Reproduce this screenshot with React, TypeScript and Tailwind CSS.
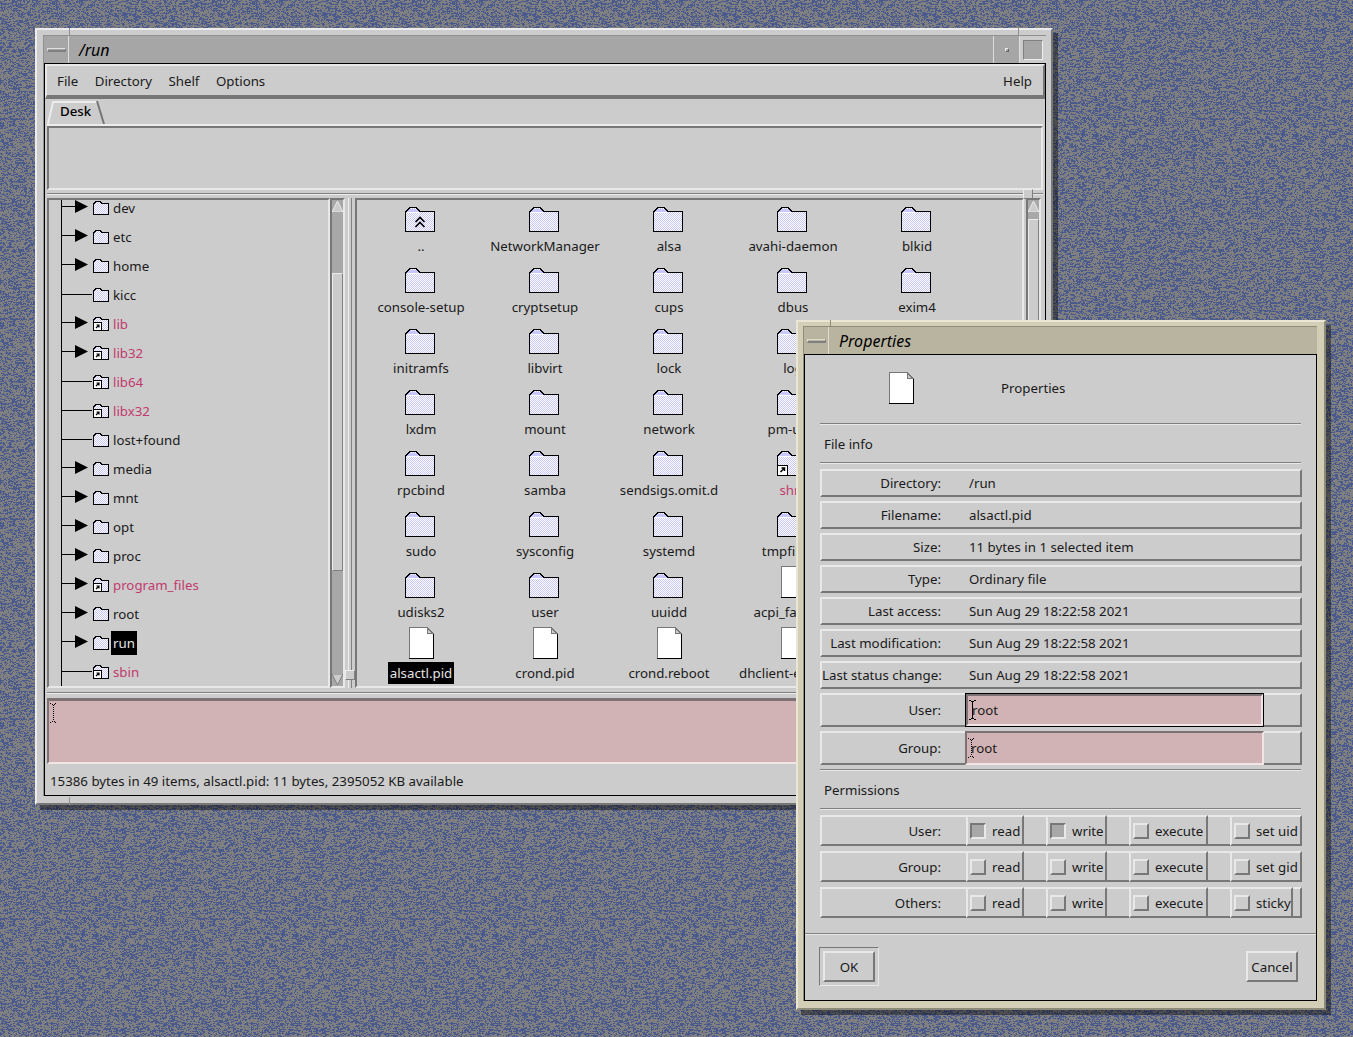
import React from "react";

// wallpaper: seeded 1px noise, two colours, slightly clumped
function noisePath(size: number) {
  let s = 2463534242;
  const next = () => {
    s ^= s << 13;
    s ^= s >>> 17;
    s ^= s << 5;
    s >>>= 0;
    return s / 4294967296;
  };
  let d = "";
  let prev = false;
  for (let y = 0; y < size; y++) {
    for (let x = 0; x < size; x++) {
      const blue = next() < 0.3 ? prev : next() < 0.42;
      if (blue) d += `M${x} ${y}h1v1h-1z`;
      prev = blue;
    }
  }
  return d;
}
const NOISE = noisePath(200);

function Wallpaper() {
  return (
    <svg className="absolute inset-0" width="1353" height="1037" shapeRendering="crispEdges">
      <defs>
        <pattern id="noise" width="200" height="200" patternUnits="userSpaceOnUse">
          <rect width="200" height="200" fill="#808080" />
          <path d={NOISE} fill="#4a5a8c" />
        </pattern>
        <pattern id="dither" width="2" height="2" patternUnits="userSpaceOnUse">
          <rect width="2" height="2" fill="#ffffff" />
          <rect width="1" height="1" fill="#c8c8ff" />
          <rect x="1" y="1" width="1" height="1" fill="#c8c8ff" />
        </pattern>
      </defs>
      <rect width="1353" height="1037" fill="url(#noise)" />
    </svg>
  );
}

function Folder({ up, link }: { up?: boolean; link?: boolean }) {
  return (
    <svg width="31" height="25" viewBox="0 0 31 25" shapeRendering="crispEdges" className="-ml-[1px] shrink-0">
      <path d="M1 24V5h1V4h1V3h1V2h1V1h7v1h1v1h1v1h1v1h15v19z" fill="url(#dither)" stroke="none" />
      <path d="M2 5V4h1V3h1V2h8v1h1v1h1v1z" fill="#c8c8ff" />
      <path d="M.5 24.5v-20h1v-1h1v-1h1v-1h1v-1h7v1h1v1h1v1h1v1h15v20z" fill="none" stroke="#000" />
      <path d="M2 5h13" stroke="#fff" />
      {up && (
        <g fill="none" stroke="#000" strokeWidth="1.6" shapeRendering="auto">
          <path d="M10.5 15l4.5-4.5 4.5 4.5" />
          <path d="M10.5 20l4.5-4.5 4.5 4.5" />
        </g>
      )}
      {link && (
        <g>
          <rect x=".5" y="14.5" width="10" height="10" fill="#fff" stroke="#000" />
          <path d="M3.5 21l4-4M4.5 17h3v3" fill="none" stroke="#000" strokeWidth="1.5" shapeRendering="auto" />
        </g>
      )}
    </svg>
  );
}

function SmallFolder({ link }: { link?: boolean }) {
  return (
    <svg width="16" height="14" viewBox="0 0 16 14" shapeRendering="crispEdges" className="shrink-0">
      <path d="M1 13V3l2-2h4l2 2h6v10z" fill="url(#dither)" />
      <path d="M.5 13.5v-11h1v-1h1v-1h5v1h1v1h7v11z" fill="none" stroke="#000" />
      {link && (
        <g>
          <rect x=".5" y="5.5" width="8" height="8" fill="#fff" stroke="#000" />
          <path d="M3 11l3-3M3.5 8H6v2.5" fill="none" stroke="#000" strokeWidth="1.2" shapeRendering="auto" />
        </g>
      )}
    </svg>
  );
}

function FileIcon() {
  return (
    <svg width="25" height="32" viewBox="0 0 25 32" shapeRendering="crispEdges" className="shrink-0">
      <path d="M1 1h17l6 6v24H1z" fill="#fff" />
      <path d="M18 1l6 6h-6z" fill="#cccccc" />
      <path d="M.5 31V.5h17.5M18 .5l6 6" fill="none" stroke="#777" />
      <path d="M18.5 .5v6h6" fill="none" stroke="#777" />
      <path d="M24.5 7v24.5H0" fill="none" stroke="#000" />
    </svg>
  );
}

function IBeam({ dotted }: { dotted?: boolean }) {
  return (
    <svg width="7" height="20" viewBox="0 0 7 20" shapeRendering="crispEdges" className="shrink-0">
      <path
        d="M0 .5h2M5 .5h2M2 1.5h3M3.5 2v16M2 18.5h3M0 19.5h2M5 19.5h2"
        stroke="#000"
        strokeDasharray={dotted ? "1 1" : undefined}
        fill="none"
      />
    </svg>
  );
}

function Sep({ full }: { full?: boolean }) {
  return <div className={`h-[2px] border-t border-b border-t-[#808080] border-b-[#e8e8e8] ${full ? "" : "mx-[15px]"}`} />;
}

function TitleBar({ title, beige, maximize }: { title: string; beige?: boolean; maximize?: boolean }) {
  const bg = beige ? "bg-[#b9b4a0]" : "bg-[#a6a6a6]";
  const line = beige ? "border-[#dedbc8]" : "border-[#dedede]";
  return (
    <div className={`flex h-[27px] shrink-0 ${bg}`}>
      <div className={`flex h-full w-[25px] shrink-0 items-center justify-center border-r ${line}`}>
        <div className={`h-[4px] w-[19px] border-t border-l border-b-2 border-r ${line} border-b-[#808080] border-r-[#808080]`} />
      </div>
      <div className="ml-[10px] flex-1 text-[16px] leading-[29px] italic text-black">{title}</div>
      {maximize && (
        <>
          <div className={`flex h-full w-[26px] shrink-0 items-center justify-center border-l ${line}`}>
            <div className="h-[4px] w-[4px] border border-t-[#eee] border-l-[#eee] border-r-[#666] border-b-[#666]" />
          </div>
          <div className={`flex h-full w-[27px] shrink-0 items-center justify-center border-l ${line} bg-[#cccccc]`}>
            <div className="h-[20px] w-[20px] border border-t-[#808080] border-l-[#808080] border-r-[#eee] border-b-[#eee] bg-[#a6a6a6]" />
          </div>
        </>
      )}
    </div>
  );
}

const TREE: { name: string; arrow?: boolean; link?: boolean; selected?: boolean }[] = [
  { name: "dev", arrow: true },
  { name: "etc", arrow: true },
  { name: "home", arrow: true },
  { name: "kicc" },
  { name: "lib", arrow: true, link: true },
  { name: "lib32", arrow: true, link: true },
  { name: "lib64", link: true },
  { name: "libx32", link: true },
  { name: "lost+found" },
  { name: "media", arrow: true },
  { name: "mnt", arrow: true },
  { name: "opt", arrow: true },
  { name: "proc", arrow: true },
  { name: "program_files", arrow: true, link: true },
  { name: "root", arrow: true },
  { name: "run", arrow: true, selected: true },
  { name: "sbin", link: true },
];

function TreeRow({ name, arrow, link, selected }: (typeof TREE)[number]) {
  return (
    <div className="flex h-[29px] items-center">
      <svg width="44" height="29" viewBox="0 0 44 29" shapeRendering="crispEdges" className="shrink-0">
        <path d="M12.5 0v29" stroke="#000" />
        <path d={arrow ? "M12 13.5h14" : "M12 14.5h31"} stroke="#000" />
        {arrow && <path d="M26 7l13 6.5L26 20z" fill="#000" shapeRendering="auto" />}
      </svg>
      <div className="flex h-[29px] items-center pt-[1px]">
        <SmallFolder link={link} />
      </div>
      <span
        className={`ml-[2px] px-[2px] leading-[24px] ${
          selected ? "bg-black text-[#e4e4e4]" : link ? "text-[#c23a6e]" : "text-[#1a1a1a]"
        }`}
      >
        {name}
      </span>
    </div>
  );
}

type Item = { name: string; kind: "folder" | "up" | "link" | "file" | "blank"; selected?: boolean; under?: boolean };
const f = (name: string): Item => ({ name, kind: "folder" });
const p = (name: string): Item => ({ name, kind: "file" });
const blank = (name: string): Item => ({ name, kind: "blank" });

const FILES: Item[] = [
  { name: "..", kind: "up" }, f("NetworkManager"), f("alsa"), f("avahi-daemon"), f("blkid"),
  f("console-setup"), f("cryptsetup"), f("cups"), f("dbus"), f("exim4"),
  f("initramfs"), f("libvirt"), f("lock"), f("log"), blank("b1"),
  f("lxdm"), f("mount"), f("network"), f("pm-utils"), blank("b2"),
  f("rpcbind"), f("samba"), f("sendsigs.omit.d"), { name: "shm", kind: "link" }, blank("b3"),
  f("sudo"), f("sysconfig"), f("systemd"), f("tmpfiles.d"), blank("b4"),
  f("udisks2"), f("user"), f("uuidd"), p("acpi_fakekey"), blank("b5"),
  { name: "alsactl.pid", kind: "file", selected: true }, p("crond.pid"), p("crond.reboot"),
  { name: "dhclient-eth", kind: "file", under: true },
];

function FileCell({ item }: { item: Item }) {
  if (item.kind === "blank") return <div className="h-[61px] w-[124px]" />;
  return (
    <div className="flex h-[61px] w-[124px] flex-col items-center">
      <div className="flex h-[32px] items-end">
        {item.kind === "file" ? <FileIcon /> : <Folder up={item.kind === "up"} link={item.kind === "link"} />}
      </div>
      <div
        className={`mt-[3px] px-[2px] leading-[22px] whitespace-nowrap ${item.under ? "ml-[6px] self-start" : ""} ${
          item.selected ? "bg-black text-[#e4e4e4]" : item.kind === "link" ? "text-[#c23a6e]" : "text-[#1a1a1a]"
        }`}
      >
        {item.name}
      </div>
    </div>
  );
}

function MainWindow() {
  return (
    <div className="absolute left-[35px] top-[28px] h-[777px] w-[1018px] border-2 border-t-[#ececec] border-l-[#ececec] border-r-[#777777] border-b-[#777777] bg-[#cccccc] pt-[5px] pr-[5px] pl-[6px] shadow-[5px_5px_0_rgba(0,0,0,0.4)]">
      <div className="border-t border-l border-t-[#909090] border-l-[#909090]">
        <TitleBar title="/run" maximize />
        <div className="flex h-[733px] flex-col border border-black bg-[#cccccc]">
          {/* menu */}
          <div className="flex h-[35px] shrink-0 items-center gap-[16.5px] border-t-2 border-l-2 border-t-[#e8e8e8] border-l-[#e8e8e8] border-b-[4px] border-b-[#777777] border-r-2 border-r-[#777777] pt-[2px] pr-[11px] pl-[10px] text-[#1a1a1a]">
            <span>File</span>
            <span>Directory</span>
            <span>Shelf</span>
            <span>Options</span>
            <span className="ml-auto">Help</span>
          </div>
          {/* tabs */}
          <div className="h-[25px] shrink-0 pl-[2px]">
            <div className="relative h-[25px] w-[58px] pl-[13px] leading-[25px] font-medium text-black">
              Desk
              <svg width="58" height="25" viewBox="0 0 58 25" className="absolute top-0 left-0">
                <path d="M1 25L6 3h44" fill="none" stroke="#ececec" strokeWidth="2" />
                <path d="M50 2l7 23" fill="none" stroke="#777" strokeWidth="2" />
              </svg>
            </div>
          </div>
          {/* tab page */}
          <div className="mx-[2px] h-[66px] shrink-0 border-t-2 border-t-[#ececec]">
            <div className="h-[64px] border-t-2 border-l-2 border-r-2 border-b-2 border-t-[#777777] border-l-[#777777] border-r-[#e8e8e8] border-b-[#e8e8e8]" />
          </div>
          {/* upper sash */}
          <div className="relative mx-[2px] h-[8px] shrink-0">
            <div className="mt-[3px] h-[2px] border-t border-t-[#808080] border-b border-b-[#ececec]" />
            <div className="absolute top-[-1px] right-[10px] h-[10px] w-[10px] border border-t-[#ececec] border-l-[#ececec] border-r-[#808080] border-b-[#808080] bg-[#cccccc]" />
          </div>
          {/* panes */}
          <div className="mx-[2px] flex h-[490px] shrink-0">
            <div className="h-full w-[283px] shrink-0 overflow-hidden border-t-2 border-l-2 border-r-2 border-b-2 border-t-[#777777] border-l-[#777777] border-r-[#e8e8e8] border-b-[#e8e8e8]">
              <div className="-mt-[7px]">
                {TREE.map((t) => (
                  <TreeRow key={t.name} {...t} />
                ))}
              </div>
            </div>
            <ScrollBar thumbTop={73} thumbHeight={298} />
            <div className="relative flex h-full w-[10px] shrink-0 justify-center">
              <div className="h-full w-[4px] border-l border-r border-l-[#ececec] border-r-[#808080]" />
              <div className="absolute top-[472px] left-0 h-[10px] w-[10px] border border-t-[#ececec] border-l-[#ececec] border-r-[#808080] border-b-[#808080] bg-[#cccccc]" />
            </div>
            <div className="h-full w-[669px] shrink-0 overflow-hidden border-t-2 border-l-2 border-r-2 border-b-2 border-t-[#777777] border-l-[#777777] border-r-[#e8e8e8] border-b-[#e8e8e8]">
              <div className="ml-[2px] flex w-[620px] flex-wrap">
                {FILES.map((it) => (
                  <FileCell key={it.name} item={it} />
                ))}
              </div>
            </div>
            <div className="ml-[2px] h-full">
              <ScrollBar thumbTop={19} thumbHeight={440} />
            </div>
          </div>
          {/* lower sash */}
          <div className="mx-[2px] h-[10px] shrink-0">
            <div className="mt-[4px] h-[2px] border-t border-t-[#808080] border-b border-b-[#ececec]" />
          </div>
          {/* pink input */}
          <div className="mx-[2px] h-[66px] shrink-0 border-t-[3px] border-l-2 border-r-2 border-b-2 border-t-[#7d7273] border-l-[#7d7273] border-r-[#f0e4e4] border-b-[#f0e4e4] bg-[#d2b3b5] pt-[2px] pl-[1px]">
            <IBeam dotted />
          </div>
          {/* status */}
          <div className="flex h-[31px] shrink-0 items-center pt-[5px] pl-[5px] text-[#1a1a1a]">
            15386 bytes in 49 items, alsactl.pid: 11 bytes, 2395052 KB available
          </div>
        </div>
      </div>
      <div className="absolute top-[-2px] left-[32px] h-[8px] w-px bg-[#909090]" />
      <div className="absolute top-[-2px] right-[32px] h-[8px] w-px bg-[#909090]" />
      <div className="absolute bottom-[-2px] left-[32px] h-[8px] w-px bg-[#909090]" />
    </div>
  );
}

function ScrollBar({ thumbTop, thumbHeight }: { thumbTop: number; thumbHeight: number }) {
  return (
    <div className="relative h-full w-[15px] shrink-0 border-l-2 border-r-2 border-t-2 border-b-2 border-l-[#777777] border-t-[#777777] border-r-[#e8e8e8] border-b-[#e8e8e8] bg-[#a8a8a8]">
      <svg width="11" height="12" viewBox="0 0 11 12" className="absolute top-0 left-0">
        <path d="M5.5 1L11 12H0z" fill="#cccccc" stroke="#e8e8e8" strokeWidth="1" />
      </svg>
      <div
        className="absolute left-0 w-[11px] border border-t-[#ececec] border-l-[#ececec] border-r-[#808080] border-b-[#808080] bg-[#cccccc]"
        style={{ top: thumbTop, height: thumbHeight }}
      />
      <svg width="11" height="12" viewBox="0 0 11 12" className="absolute bottom-0 left-0">
        <path d="M5.5 11L11 0H0z" fill="#cccccc" stroke="#808080" strokeWidth="1" />
      </svg>
    </div>
  );
}

function InfoRow({ label, value }: { label: string; value: string }) {
  return (
    <div className="mb-[4px] flex h-[28px] items-center border-2 border-t-[#e8e8e8] border-l-[#e8e8e8] border-r-[#777777] border-b-[#777777] pt-[2px] text-[#1a1a1a]">
      <div className="w-[119px] shrink-0 text-right whitespace-nowrap">{label}</div>
      <div className="ml-[28px]">{value}</div>
    </div>
  );
}

function FieldRow({ label, focused }: { label: string; focused?: boolean }) {
  return (
    <div className="mb-[4px] flex h-[34px] border-2 border-t-[#e8e8e8] border-l-[#e8e8e8] border-r-[#777777] border-b-[#777777] text-[#1a1a1a]">
      <div className="w-[143px] shrink-0 pr-[24px] text-right leading-[30px]">{label}</div>
      <div className={`-my-[2px] h-[34px] w-[299px] shrink-0 ${focused ? "border border-black" : ""}`}>
        <div className="flex h-full items-center border-2 border-t-[#7d7273] border-l-[#7d7273] border-r-[#f0e4e4] border-b-[#f0e4e4] bg-[#d2b3b5] pl-[1px]">
          <IBeam dotted={!focused} />
          <span className="mt-[2px] -ml-[4px]">root</span>
        </div>
      </div>
    </div>
  );
}

function Check({ label, width, on, gap }: { label: string; width: string; on?: boolean; gap: string }) {
  return (
    <div
      className={`-my-[2px] flex shrink-0 items-center border-2 border-t-[#e8e8e8] border-l-[#e8e8e8] border-r-[#777777] border-b-[#777777] pl-[2px] ${width} ${gap}`}
    >
      <div
        className={`h-[16px] w-[16px] shrink-0 border-2 ${
          on
            ? "border-t-[#777777] border-l-[#777777] border-r-[#e8e8e8] border-b-[#e8e8e8] bg-[#a8a8a8]"
            : "border-t-[#e8e8e8] border-l-[#e8e8e8] border-r-[#777777] border-b-[#777777]"
        }`}
      />
      <span className="mt-[2px] ml-[6px] whitespace-nowrap">{label}</span>
    </div>
  );
}

function PermRow({ label, last, on, lastW }: { label: string; last: string; on?: boolean; lastW: string }) {
  return (
    <div className="mb-[5px] flex h-[31px] border-2 border-t-[#e8e8e8] border-l-[#e8e8e8] border-r-[#777777] border-b-[#777777] text-[#1a1a1a]">
      <div className="w-[144px] shrink-0 pr-[25px] text-right leading-[29px]">{label}</div>
      <Check label="read" width="w-[58px]" gap="" on={on} />
      <Check label="write" width="w-[61px]" gap="ml-[22px]" on={on} />
      <Check label="execute" width="w-[79px]" gap="ml-[22px]" />
      <Check label={last} width={lastW} gap="ml-[22px]" />
    </div>
  );
}

function Dialog() {
  return (
    <div className="absolute left-[796px] top-[320px] h-[690px] w-[530px] border-2 border-t-[#e9e6d6] border-l-[#e9e6d6] border-r-[#8c8a78] border-b-[#8c8a78] bg-[#d3cfb6] pt-[4px] pr-[7px] pl-[5px] shadow-[5px_5px_0_rgba(0,0,0,0.4)]">
      <div className="border-t border-l border-t-[#8f8c7c] border-l-[#8f8c7c]">
        <TitleBar title="Properties" beige />
        <div className="flex h-[647px] flex-col border border-black bg-[#cccccc]">
          <div className="mb-[2px] flex h-[66px] shrink-0 items-center pl-[84px] text-[#1a1a1a]">
            <FileIcon />
            <span className="mt-[2px] ml-[87px]">Properties</span>
          </div>
          <Sep />
          <div className="flex h-[37px] shrink-0 items-center pt-[2px] pl-[19px] text-[#1a1a1a]">File info</div>
          <Sep />
          <div className="mt-[5px] pr-[14px] pl-[15px]">
            <InfoRow label="Directory:" value="/run" />
            <InfoRow label="Filename:" value="alsactl.pid" />
            <InfoRow label="Size:" value="11 bytes in 1 selected item" />
            <InfoRow label="Type:" value="Ordinary file" />
            <InfoRow label="Last access:" value="Sun Aug 29 18:22:58 2021" />
            <InfoRow label="Last modification:" value="Sun Aug 29 18:22:58 2021" />
            <InfoRow label="Last status change:" value="Sun Aug 29 18:22:58 2021" />
            <FieldRow label="User:" focused />
            <FieldRow label="Group:" />
          </div>
          <Sep />
          <div className="flex h-[37px] shrink-0 items-center pt-[2px] pl-[19px] text-[#1a1a1a]">Permissions</div>
          <Sep />
          <div className="mt-[5px] pr-[14px] pl-[15px]">
            <PermRow label="User:" last="set uid" lastW="w-[72px]" on />
            <PermRow label="Group:" last="set gid" lastW="w-[72px]" />
            <PermRow label="Others:" last="sticky" lastW="w-[63px]" />
          </div>
          <div className="mt-[10px]">
            <Sep full />
          </div>
          <div className="mt-[12px] flex items-center justify-between pr-[18px] pl-[14px] text-[#1a1a1a]">
            <div className="border border-t-[#777777] border-l-[#777777] border-r-[#e8e8e8] border-b-[#e8e8e8] p-[3px]">
              <div className="flex h-[31px] w-[52px] items-center justify-center border-2 border-t-[#e8e8e8] border-l-[#e8e8e8] border-r-[#777777] border-b-[#777777] pt-[2px]">
                OK
              </div>
            </div>
            <div className="flex h-[31px] w-[52px] items-center justify-center border-2 border-t-[#e8e8e8] border-l-[#e8e8e8] border-r-[#777777] border-b-[#777777] pt-[2px]">
              Cancel
            </div>
          </div>
        </div>
      </div>
      <div className="absolute top-[-2px] left-[32px] h-[7px] w-px bg-[#8f8c7c]" />
    </div>
  );
}

export default function App() {
  return (
    <div className="relative h-[1037px] w-[1353px] overflow-hidden text-[13.27px] font-['Noto_Sans',sans-serif]">
      <Wallpaper />
      <MainWindow />
      <Dialog />
    </div>
  );
}
